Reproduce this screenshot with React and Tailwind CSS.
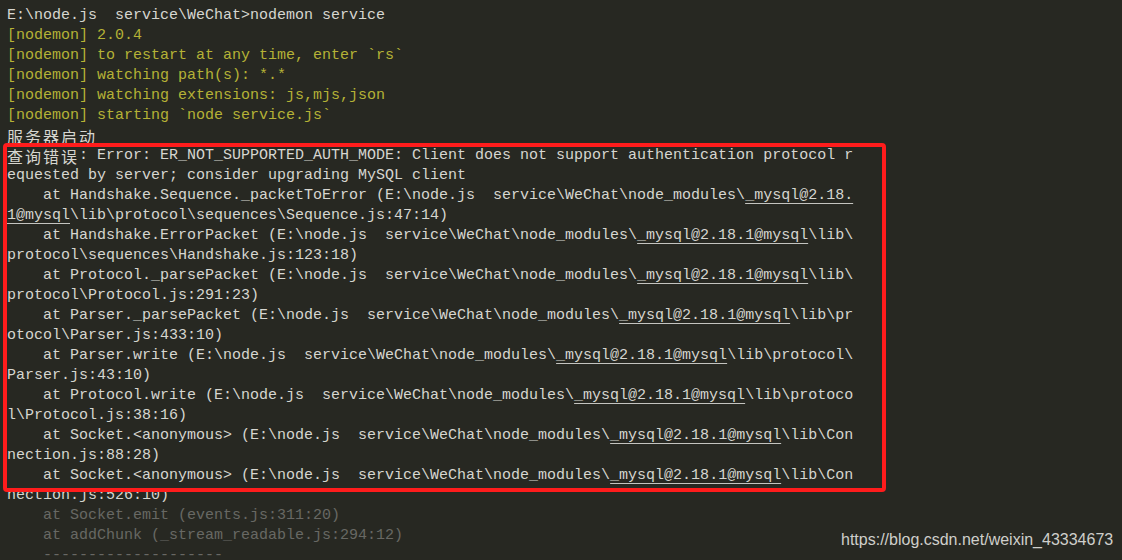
import React from "react";

const MONO = "font-['Liberation_Mono','DejaVu_Sans_Mono',monospace]";
const MOD = "_mysql@2.18.1@mysql";

// segments: plain string, { cjk } for double-width text, { u } for the underlined module link
const lines = [
  { c: "w", s: ["E:\\node.js  service\\WeChat>nodemon service"] },
  { c: "y", s: ["[nodemon] 2.0.4"] },
  { c: "y", s: ["[nodemon] to restart at any time, enter `rs`"] },
  { c: "y", s: ["[nodemon] watching path(s): *.*"] },
  { c: "y", s: ["[nodemon] watching extensions: js,mjs,json"] },
  { c: "y", s: ["[nodemon] starting `node service.js`"] },
  { c: "w", s: [{ cjk: "服务器启动" }] },
  {
    c: "w",
    s: [{ cjk: "查询错误" }, ": Error: ER_NOT_SUPPORTED_AUTH_MODE: Client does not support authentication protocol r"],
  },
  { c: "w", s: ["equested by server; consider upgrading MySQL client"] },
  { c: "w", s: ["    at Handshake.Sequence._packetToError (E:\\node.js  service\\WeChat\\node_modules\\", { u: "_mysql@2.18." }] },
  { c: "w", s: [{ u: "1@mysql" }, "\\lib\\protocol\\sequences\\Sequence.js:47:14)"] },
  { c: "w", s: ["    at Handshake.ErrorPacket (E:\\node.js  service\\WeChat\\node_modules\\", { u: MOD }, "\\lib\\"] },
  { c: "w", s: ["protocol\\sequences\\Handshake.js:123:18)"] },
  { c: "w", s: ["    at Protocol._parsePacket (E:\\node.js  service\\WeChat\\node_modules\\", { u: MOD }, "\\lib\\"] },
  { c: "w", s: ["protocol\\Protocol.js:291:23)"] },
  { c: "w", s: ["    at Parser._parsePacket (E:\\node.js  service\\WeChat\\node_modules\\", { u: MOD }, "\\lib\\pr"] },
  { c: "w", s: ["otocol\\Parser.js:433:10)"] },
  { c: "w", s: ["    at Parser.write (E:\\node.js  service\\WeChat\\node_modules\\", { u: MOD }, "\\lib\\protocol\\"] },
  { c: "w", s: ["Parser.js:43:10)"] },
  { c: "w", s: ["    at Protocol.write (E:\\node.js  service\\WeChat\\node_modules\\", { u: MOD }, "\\lib\\protoco"] },
  { c: "w", s: ["l\\Protocol.js:38:16)"] },
  { c: "w", s: ["    at Socket.<anonymous> (E:\\node.js  service\\WeChat\\node_modules\\", { u: MOD }, "\\lib\\Con"] },
  { c: "w", s: ["nection.js:88:28)"] },
  { c: "w", s: ["    at Socket.<anonymous> (E:\\node.js  service\\WeChat\\node_modules\\", { u: MOD }, "\\lib\\Con"] },
  { c: "w", s: ["nection.js:526:10)"] },
  { c: "g", s: ["    at Socket.emit (events.js:311:20)"] },
  { c: "g", s: ["    at addChunk (_stream_readable.js:294:12)"] },
  { c: "g", s: ["    --------------------"] },
];

const colors = {
  w: "text-[#d6d6d0]",
  y: "text-[#b5b236]",
  g: "text-[#686864]",
};

function Segment({ seg }) {
  if (typeof seg === "string") return <span>{seg}</span>;
  if (seg.cjk)
    return (
      <span className="inline-block align-top h-[20px] leading-[20px] font-['Noto_Sans_CJK_SC',sans-serif] text-[16px] tracking-[2px]">
        {seg.cjk}
      </span>
    );
  return (
    <span className="underline decoration-[#c4c4c0] decoration-1 underline-offset-[4px]">{seg.u}</span>
  );
}

export default function App() {
  return (
    <div className="relative w-[1122px] h-[560px] overflow-hidden bg-[#272822]">
      <div className={`${MONO} text-[15px] leading-[20px] pt-[6px] pl-[7px]`}>
        {lines.map((line, i) => (
          <div key={i} className={`whitespace-pre h-[20px] ${colors[line.c]}`}>
            {line.s.map((seg, j) => (
              <Segment key={j} seg={seg} />
            ))}
          </div>
        ))}
      </div>

      {/* red highlight box drawn over the stack trace */}
      <div className="absolute left-[3px] top-[143px] w-[883px] h-[349px] border-[4px] border-[#ff1c1c] rounded-[4px] pointer-events-none" />

      {/* blog watermark */}
      <div className="absolute left-[841px] top-[529px] font-['Liberation_Sans',Arial,sans-serif] text-[16px] leading-[22px] text-[#cfcfcb]">
        https://blog.csdn.net/weixin_43334673
      </div>
    </div>
  );
}
